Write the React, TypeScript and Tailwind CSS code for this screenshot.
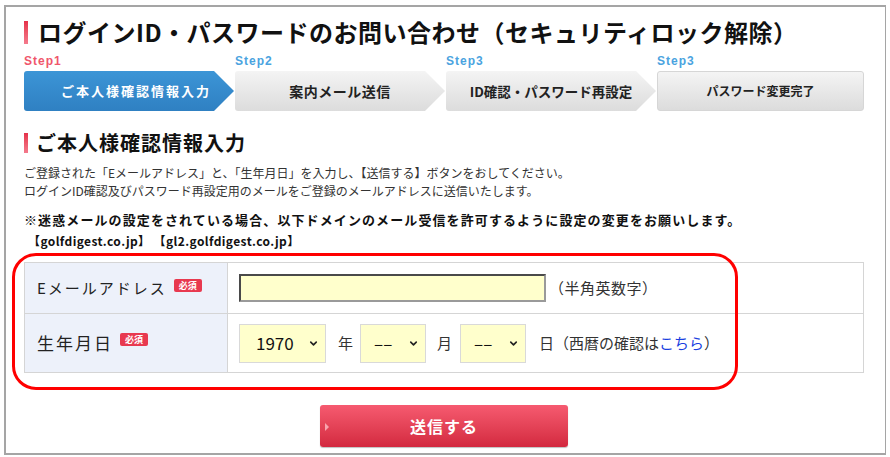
import { ChevronDown } from "lucide-react";

const steps = [
  { label: "Step1", text: "ご本人様確認情報入力", size: "text-[13px] tracking-[2px]" },
  { label: "Step2", text: "案内メール送信", size: "text-[14px] tracking-[0.5px]" },
  { label: "Step3", text: "ID確認・パスワード再設定", size: "text-[13.5px]" },
  { label: "Step3", text: "パスワード変更完了", size: "text-[12px]" },
];

function Badge() {
  return (
    <span className="ml-[7px] mt-[1px] inline-flex h-[13px] w-[28px] items-center justify-center rounded-[2px] bg-[#e8394f] text-[9px] font-bold leading-none text-white">
      必須
    </span>
  );
}

function FakeSelect({ value, w, pl }: { value: string; w: string; pl: string }) {
  return (
    <div className={`flex h-[39px] items-center border border-[#d9d9d9] bg-[#ffffcc] ${w} ${pl}`}>
      <span className="flex-1 text-[17px] text-[#111]">{value}</span>
      <ChevronDown className="mr-[6px] h-[11px] w-[11px] text-[#222]" strokeWidth={3.5} />
    </div>
  );
}

export default function App() {
  return (
    <div className="h-[457px] w-[890px] bg-white pl-[4px] pt-[5px] font-['Noto_Sans_CJK_JP','Noto_Sans',sans-serif] text-[#222]">
      <div className="h-[450px] w-[882px] border-b-2 border-l-2 border-r border-t-2 border-[#a5a5a5] pl-[18px] pt-[11px]">
        {/* title */}
        <div className="flex h-[28px] items-center">
          <div className="h-[23px] w-[4px] bg-gradient-to-b from-[#e52f4a] to-[#f47a8d]" />
          <h1 className="ml-[10px] text-[24px] font-bold leading-[28px] tracking-[0.5px] text-[#111]">
            ログインID・パスワードのお問い合わせ（セキュリティロック解除）
          </h1>
        </div>

        {/* steps */}
        <div className="mt-[8px] grid w-[840px] grid-cols-[210px_210px_210px_1fr] gap-[1px]">
          {steps.map((s, i) => {
            const active = i === 0;
            const last = i === steps.length - 1;
            return (
              <div key={i} className="flex flex-col">
                <div
                  className={`h-[14px] font-['Liberation_Sans',sans-serif] text-[12px] font-bold leading-[14px] tracking-[1px] ${
                    active ? "text-[#f0566b]" : "text-[#4aa3e0]"
                  }`}
                >
                  {s.label}
                </div>
                <div
                  className={`mt-[3px] flex h-[40px] items-center justify-center font-bold ${s.size} ${
                    active
                      ? "bg-gradient-to-b from-[#3c95d6] to-[#2f80c2] pl-[14px] text-white"
                      : "bg-gradient-to-b from-[#f4f4f4] to-[#dcdcdc] text-[#222]"
                  } ${
                    last
                      ? "rounded-[3px] border border-[#d6d6d6]"
                      : "rounded-l-[3px] [clip-path:polygon(0_0,calc(100%-20px)_0,100%_50%,calc(100%-20px)_100%,0_100%)]"
                  }`}
                >
                  {s.text}
                </div>
              </div>
            );
          })}
        </div>

        {/* section heading */}
        <div className="mt-[19px] flex h-[26px] items-center">
          <div className="h-[20px] w-[4px] bg-gradient-to-b from-[#e52f4a] to-[#f47a8d]" />
          <h2 className="ml-[8px] text-[20px] font-bold leading-[26px] tracking-[1px] text-[#111]">ご本人様確認情報入力</h2>
        </div>

        <p className="mt-[8px] text-[12px] leading-[18px] text-[#333]">
          ご登録された「Eメールアドレス」と、「生年月日」を入力し、【送信する】ボタンをおしてください。
          <br />
          ログインID確認及びパスワード再設定用のメールをご登録のメールアドレスに送信いたします。
        </p>

        <p className="mt-[11px] text-[13px] font-bold leading-[18px] tracking-[1.1px] text-[#111]">
          ※迷惑メールの設定をされている場合、以下ドメインのメール受信を許可するように設定の変更をお願いします。
        </p>
        <p className="mt-[4px] pl-[4px] text-[12px] font-bold leading-[16px] tracking-[0.4px] text-[#111]">
          【golfdigest.co.jp】 【gl2.golfdigest.co.jp】
        </p>

        {/* form table */}
        <div className="relative mt-[13px] w-[840px]">
          <div className="border border-[#d5d5d5]">
            <div className="flex h-[51px] border-b border-[#d5d5d5]">
              <div className="flex w-[203px] items-start border-r border-[#d5d5d5] bg-[#edf1fa] pl-[12px] pt-[15px]">
                <span className="text-[15px] leading-[20px] tracking-[2px] text-[#222]">Eメールアドレス</span>
                <Badge />
              </div>
              <div className="flex flex-1 items-center pl-[11px]">
                <div className="h-[28px] w-[307px] border-2 border-b-[#9a9a9a] border-l-[#4a4a4a] border-r-[#9a9a9a] border-t-[#4a4a4a] bg-[#ffffcc]" />
                <span className="ml-[3px] text-[15px] tracking-[0.5px] text-[#333]">（半角英数字）</span>
              </div>
            </div>
            <div className="flex h-[58px]">
              <div className="flex w-[203px] items-start border-r border-[#d5d5d5] bg-[#edf1fa] pl-[12px] pt-[18px]">
                <span className="text-[17px] leading-[22px] tracking-[2px] text-[#222]">生年月日</span>
                <Badge />
              </div>
              <div className="flex flex-1 items-center pl-[11px] text-[15px] text-[#333]">
                <FakeSelect value="1970" w="w-[87px]" pl="pl-[16px]" />
                <span className="ml-[12px]">年</span>
                <FakeSelect value="––" w="ml-[7px] w-[66px]" pl="pl-[13px]" />
                <span className="ml-[11px]">月</span>
                <FakeSelect value="––" w="ml-[8px] w-[66px]" pl="pl-[13px]" />
                <span className="ml-[13px]">日</span>
                <span>
                  （西暦の確認は<span className="text-[#1a3fe0]">こちら</span>）
                </span>
              </div>
            </div>
          </div>
          {/* red annotation */}
          <div className="pointer-events-none absolute left-[-12px] top-[-9px] h-[137px] w-[726px] rounded-[24px] border-[3px] border-[#ff0000]" />
        </div>

        {/* submit */}
        <div className="mt-[32px] flex w-[840px] justify-center">
          <button
            type="button"
            className="relative flex h-[42px] w-[248px] items-center justify-center rounded-[3px] bg-gradient-to-b from-[#f65a70] to-[#d3283f] text-[16px] font-bold tracking-[1px] text-white shadow-[0_1px_1px_rgba(0,0,0,0.25)]"
          >
            <span className="absolute left-[5px] top-[18px] h-0 w-0 border-b-[4px] border-l-[4px] border-t-[4px] border-b-transparent border-l-[#f8a3ae] border-t-transparent" />
            送信する
          </button>
        </div>
      </div>
    </div>
  );
}
